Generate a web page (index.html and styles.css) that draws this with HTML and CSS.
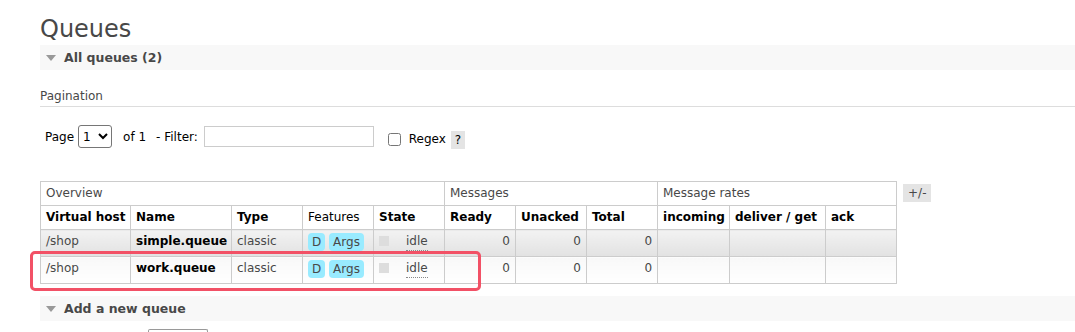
FILE: index.html
```html
<!DOCTYPE html>
<html lang="en">
<head>
  <meta charset="UTF-8">
  <title>Queues</title>
  <link rel="stylesheet" href="styles.css">
</head>
<body>
  <div class="main">
    <h1>Queues</h1>

    <div class="section">
      <h2 class="section-title"><span class="arrow"></span>All queues (2)</h2>
      <div class="section-body">
        <h3 class="subhead">Pagination</h3>
        <div class="pager">
          <span>Page</span>
          <select class="page-select"><option>1</option></select>
          <span class="of">of 1</span>
          <span>- Filter:</span>
          <input type="text" class="filter">
          <label class="regex"><input type="checkbox"> Regex</label>
          <span class="help">?</span>
        </div>

        <div class="table-wrap">
          <table class="list">
            <colgroup>
              <col class="c-vhost">
              <col class="c-name">
              <col class="c-std">
              <col class="c-std">
              <col class="c-std">
              <col class="c-std">
              <col class="c-std">
              <col class="c-std">
              <col class="c-in">
              <col class="c-deliver">
              <col class="c-std">
            </colgroup>
            <thead>
              <tr class="group">
                <th colspan="5">Overview</th>
                <th colspan="3">Messages</th>
                <th colspan="3">Message rates</th>
              </tr>
              <tr>
                <th class="b">Virtual host</th>
                <th class="b">Name</th>
                <th class="b">Type</th>
                <th>Features</th>
                <th class="b">State</th>
                <th class="b">Ready</th>
                <th class="b">Unacked</th>
                <th class="b">Total</th>
                <th class="b">incoming</th>
                <th class="b">deliver / get</th>
                <th class="b">ack</th>
              </tr>
            </thead>
            <tbody>
              <tr class="alt1">
                <td>/shop</td>
                <td class="qname">simple.queue</td>
                <td>classic</td>
                <td><span class="tag">D</span> <span class="tag">Args</span></td>
                <td><span class="state-box"></span><span class="idle">idle</span></td>
                <td class="num">0</td>
                <td class="num">0</td>
                <td class="num">0</td>
                <td></td>
                <td></td>
                <td></td>
              </tr>
              <tr class="alt2">
                <td>/shop</td>
                <td class="qname">work.queue</td>
                <td>classic</td>
                <td><span class="tag">D</span> <span class="tag">Args</span></td>
                <td><span class="state-box"></span><span class="idle">idle</span></td>
                <td class="num">0</td>
                <td class="num">0</td>
                <td class="num">0</td>
                <td></td>
                <td></td>
                <td></td>
              </tr>
            </tbody>
          </table>
          <span class="toggle">+/-</span>
          <div class="highlight"></div>
        </div>
      </div>
    </div>

    <div class="section">
      <h2 class="section-title"><span class="arrow"></span>Add a new queue</h2>
      <div class="section-body">
        <div class="stub"></div>
      </div>
    </div>
  </div>
</body>
</html>
```

FILE: styles.css
```css
body {
  margin: 0;
  font-family: "DejaVu Sans", Verdana, sans-serif;
  font-size: 12px;
  color: #484848;
  background: #fff;
}

.main {
  padding: 13px 0 0 40px;
}

h1 {
  margin: 0;
  font-size: 24px;
  font-weight: normal;
  line-height: 32px;
  color: #484848;
}

.section-title {
  margin: 0;
  height: 25px;
  display: flex;
  align-items: center;
  background: #f8f8f8;
  font-size: 12.5px;
  font-weight: bold;
  color: #484848;
}

.arrow {
  width: 0;
  height: 0;
  margin: 1px 8px 0 6px;
  border-left: 5.5px solid transparent;
  border-right: 5.5px solid transparent;
  border-top: 6px solid #999;
}

.section-body {
  padding-top: 18px;
}

.subhead {
  margin: 0;
  padding-bottom: 2px;
  border-bottom: 1px solid #ddd;
  font-size: 12px;
  font-weight: normal;
  line-height: 16px;
  color: #484848;
}

.pager {
  display: flex;
  align-items: center;
  margin: 18px 0 0 5px;
  height: 23px;
  color: #000;
}

.page-select {
  margin-left: 4px;
  width: 34px;
  height: 23px;
  font-family: "DejaVu Sans", Verdana, sans-serif;
  font-size: 12px;
  border: 1px solid #767676;
  border-radius: 3px;
  background: #fff;
}

.of {
  margin: 0 10px 0 11px;
}

.filter {
  margin-left: 6px;
  width: 170px;
  height: 21px;
  box-sizing: border-box;
  border: 1px solid #ccc;
  padding: 0;
}

.regex {
  display: flex;
  align-items: center;
  margin-left: 14px;
  margin-top: 5px;
}

.regex input {
  width: 13px;
  height: 13px;
  margin: 0 8px 0 0;
}

.help {
  margin-left: 5px;
  margin-top: 6px;
  width: 14px;
  height: 18px;
  line-height: 18px;
  text-align: center;
  background: #e4e4e4;
  font-size: 12px;
}

.table-wrap {
  position: relative;
  display: flex;
  align-items: flex-start;
  margin-top: 33px;
  margin-bottom: 12px;
}

table.list {
  border-collapse: collapse;
  table-layout: fixed;
  width: 857px;
}

col.c-vhost { width: 90px; }
col.c-name { width: 101px; }
col.c-std { width: 71px; }
col.c-in { width: 72px; }
col.c-deliver { width: 96px; }

table.list th,
table.list td {
  border: 1px solid #ccc;
  padding: 0 5px;
  text-align: left;
  vertical-align: top;
  white-space: nowrap;
}

table.list th {
  font-weight: normal;
  color: #000;
  height: 23px;
  line-height: 23px;
}

table.list th.b {
  font-weight: bold;
}

table.list tr.group th {
  color: #484848;
}

table.list td {
  height: 26px;
  line-height: 22px;
  color: #484848;
}

table.list tr.alt1 td {
  background: linear-gradient(#f2f2f2, #e2e2e2);
}

table.list tr.alt2 td {
  background: linear-gradient(#f8f8f8, #ffffff);
}

table.list td.qname {
  font-weight: bold;
  color: #000;
}

table.list td.num {
  text-align: right;
}

.tag {
  display: inline-block;
  margin-top: 3px;
  padding: 0 4px;
  height: 18px;
  line-height: 19px;
  background: #99ebff;
  border-radius: 4px;
  color: #484848;
}

.state-box {
  display: inline-block;
  width: 10px;
  height: 10px;
  margin: 6px 17px 0 0;
  vertical-align: top;
  background: #ddd;
}

.idle {
  border-bottom: 1px dotted #888;
  line-height: 18px;
  display: inline-block;
}

.toggle {
  margin: 3px 0 0 6px;
  padding: 0 5px;
  height: 18px;
  line-height: 18px;
  background: #e4e4e4;
  color: #484848;
}

.highlight {
  position: absolute;
  left: -10px;
  top: 70px;
  width: 445px;
  height: 34px;
  border: 3px solid #f25166;
  border-radius: 5px;
}

.stub {
  margin-left: 108px;
  width: 58px;
  height: 6px;
  border: 1px solid #999;
  border-bottom: none;
  border-radius: 2px 2px 0 0;
  margin-top: -10px;
}
```
